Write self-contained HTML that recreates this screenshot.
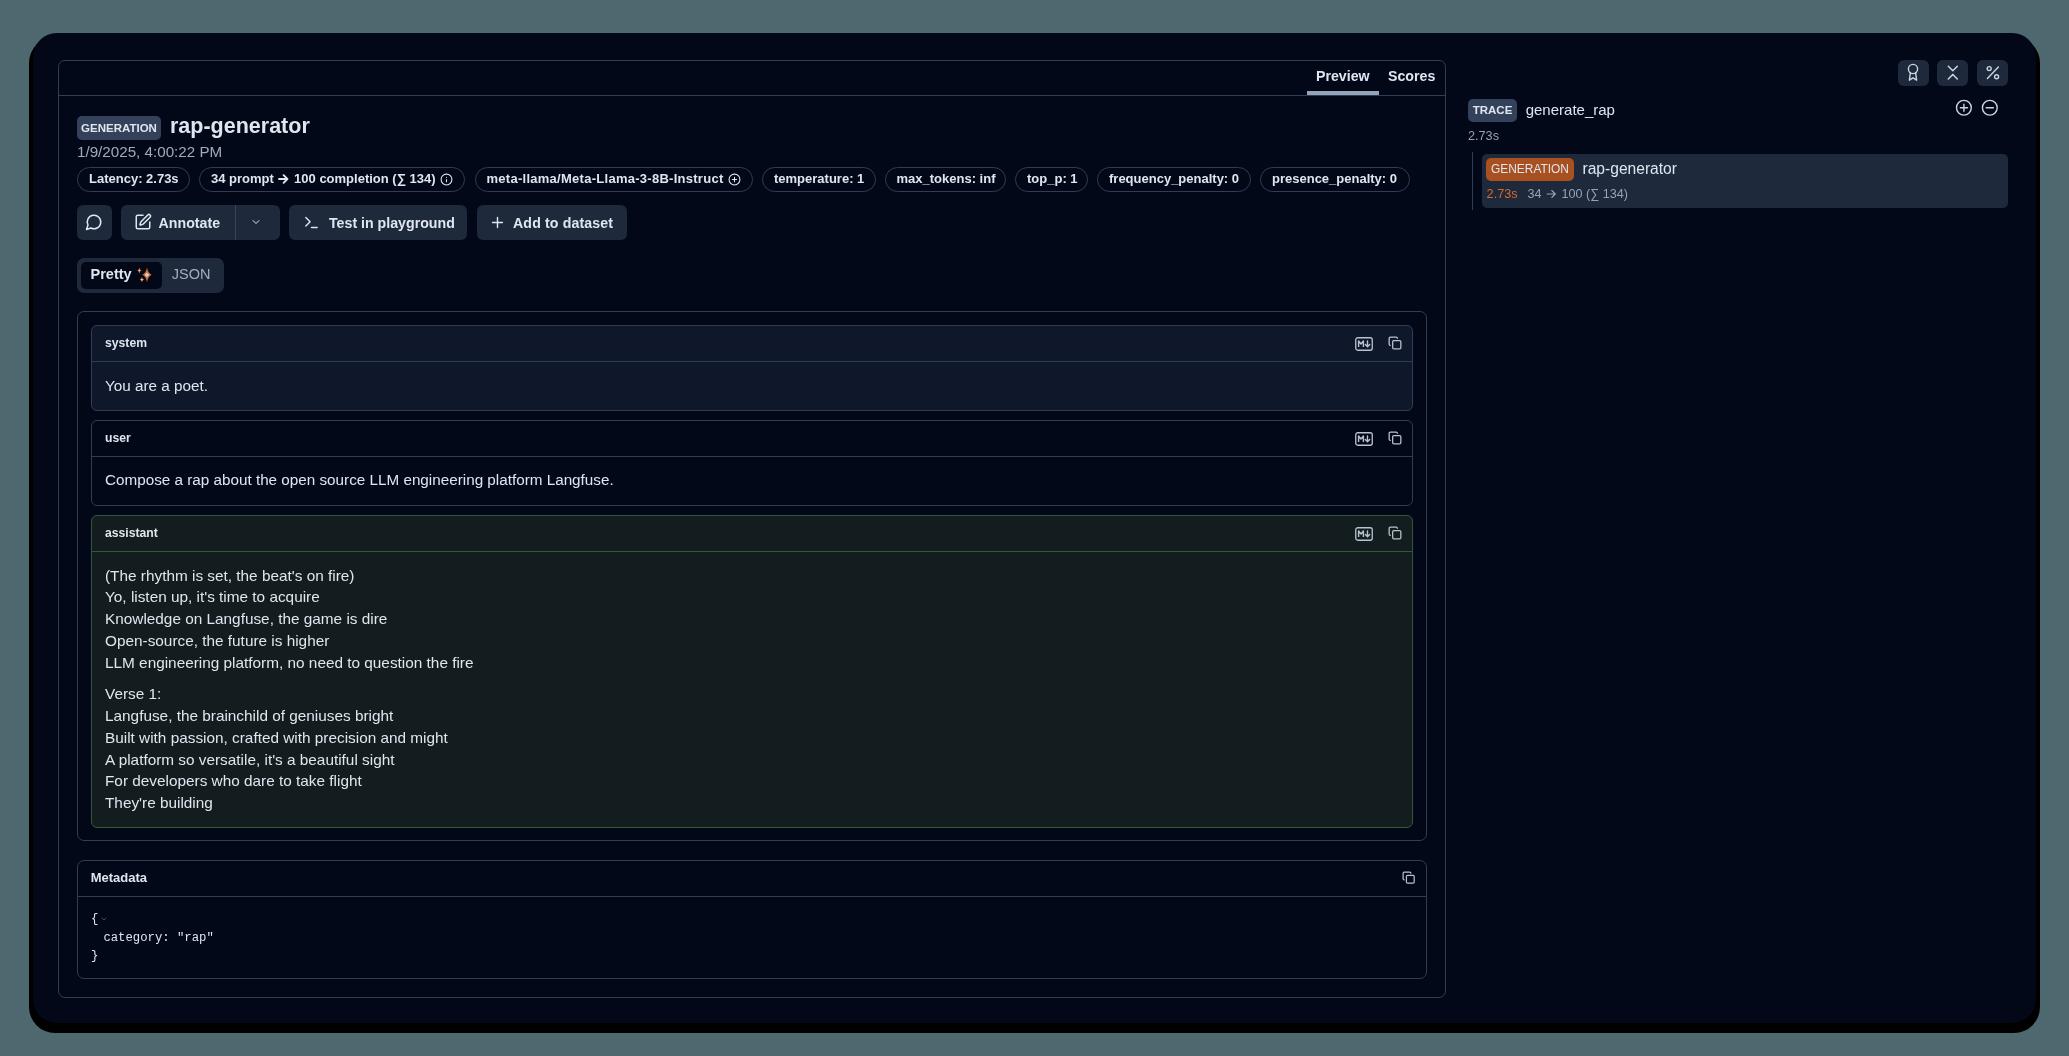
<!DOCTYPE html>
<html><head><meta charset="utf-8">
<style>
*{box-sizing:border-box;margin:0;padding:0}
html,body{width:2069px;height:1056px;overflow:hidden;background:#4e6870;font-family:"Liberation Sans",sans-serif;color:#dfe6f0}
body{position:relative}
.a{position:absolute;white-space:nowrap}
#shadow{position:absolute;left:29px;top:37px;width:2011px;height:996px;background:#000;border-radius:26px}
#win{position:absolute;left:33px;top:33px;width:2003px;height:990px;background:#020817;border-radius:24px}
.bd{border:1px solid #2f3d55}
#panel{left:58px;top:60px;width:1388px;height:938px;border-radius:7px}
.hl{position:absolute;height:1px;background:#2f3d55}
.tab{font-weight:700;font-size:14.2px;line-height:17px;color:#dfe6f0}
svg.i{position:absolute;fill:none;stroke:currentColor;stroke-linecap:round;stroke-linejoin:round}
.badge{background:#33425a;color:#dfe6f0;border-radius:5px;font-weight:700;text-align:center}
.chip{top:167px;height:25px;border-radius:13px;font-weight:700;font-size:13px;line-height:22px;padding-left:11px;color:#dfe6f0}
.btn{top:205px;height:35px;background:#1e293b;border-radius:6px}
.btxt{font-weight:700;font-size:14.2px;line-height:17px;color:#dfe6f0}
.box{border-radius:6px}
.role{font-weight:700;font-size:12.2px;line-height:15px;color:#dfe6f0}
.msg{font-size:15.35px;line-height:18px;color:#dfe6f0}
.mono{font-family:"Liberation Mono",monospace;font-size:12.27px;line-height:18.4px;color:#dfe6f0}
</style></head>
<body>
<div id="root" style="position:absolute;left:0;top:0;width:2069px;height:1056px;will-change:transform">
<div id="shadow"></div>
<div id="win"></div>

<!-- LEFT PANEL -->
<div id="panel" class="a bd"></div>
<div class="hl" style="left:59px;top:95px;width:1386px"></div>
<div class="a tab" style="left:1316px;top:67.6px">Preview</div>
<div class="a tab" style="left:1388px;top:67.6px">Scores</div>
<div class="a" style="left:1307px;top:91px;width:72px;height:4px;background:#94a3b8"></div>

<!-- title -->
<div class="a badge" style="left:77px;top:116px;width:84px;height:24px;font-size:11.5px;line-height:24px">GENERATION</div>
<div class="a" style="left:170px;top:113.5px;font-weight:700;font-size:21.5px;line-height:24px;color:#dfe6f0">rap-generator</div>
<div class="a" style="left:77px;top:142.7px;font-size:15.2px;line-height:18px;color:#9eabbd">1/9/2025, 4:00:22 PM</div>

<!-- chips -->
<div class="a chip bd" style="left:77px;width:113px">Latency: 2.73s</div>
<div class="a chip bd" style="left:199px;width:266px">34 prompt <svg style="display:inline-block;vertical-align:-1px;margin:0 1px" width="11" height="10" viewBox="0 0 11 10"><path d="M1 5h8.3M5.6 1.2 9.4 5 5.6 8.8" fill="none" stroke="currentColor" stroke-width="1.9" stroke-linecap="round" stroke-linejoin="round"/></svg> 100 completion (∑ 134)</div>
<svg class="i" style="left:440px;top:173px;color:#dfe6f0" width="13" height="13" viewBox="0 0 24 24" stroke-width="2"><circle cx="12" cy="12" r="10"/><path d="M12 16v-4M12 8h.01"/></svg>
<div class="a chip bd" style="left:474.5px;width:278.5px;letter-spacing:0.27px">meta-llama/Meta-Llama-3-8B-Instruct</div>
<svg class="i" style="left:728px;top:173px;color:#dfe6f0" width="13" height="13" viewBox="0 0 24 24" stroke-width="2"><circle cx="12" cy="12" r="10"/><path d="M8 12h8M12 8v8"/></svg>
<div class="a chip bd" style="left:762px;width:114px">temperature: 1</div>
<div class="a chip bd" style="left:884.5px;width:121px">max_tokens: inf</div>
<div class="a chip bd" style="left:1015px;width:73px">top_p: 1</div>
<div class="a chip bd" style="left:1097px;width:154px">frequency_penalty: 0</div>
<div class="a chip bd" style="left:1260px;width:150px">presence_penalty: 0</div>

<!-- buttons -->
<div class="a btn" style="left:77px;width:35px"></div>
<svg class="i" style="left:85px;top:213px;color:#dfe6f0" width="18" height="18" viewBox="0 0 24 24" stroke-width="2"><path d="M7.9 20A9 9 0 1 0 4 16.1L2 22Z"/></svg>
<div class="a btn" style="left:121px;width:159px"></div>
<div class="a" style="left:235px;top:205px;width:1px;height:35px;background:#34445e"></div>
<svg class="i" style="left:134px;top:213px;color:#dfe6f0" width="18" height="18" viewBox="0 0 24 24" stroke-width="2"><path d="M12 3H5a2 2 0 0 0-2 2v14a2 2 0 0 0 2 2h14a2 2 0 0 0 2-2v-7"/><path d="M18.375 2.625a1 1 0 0 1 3 3l-9.013 9.014a2 2 0 0 1-.853.505l-2.873.84a.5.5 0 0 1-.62-.62l.84-2.873a2 2 0 0 1 .506-.852z"/></svg>
<div class="a btxt" style="left:158.6px;top:214.6px">Annotate</div>
<svg class="i" style="left:250px;top:216px;color:#dfe6f0" width="12" height="12" viewBox="0 0 24 24" stroke-width="2"><path d="m6 9 6 6 6-6"/></svg>
<div class="a btn" style="left:289px;width:178px"></div>
<svg class="i" style="left:302.5px;top:214px;color:#dfe6f0" width="17" height="17" viewBox="0 0 24 24" stroke-width="2"><polyline points="4 17 10 11 4 5"/><line x1="12" x2="20" y1="19" y2="19"/></svg>
<div class="a btxt" style="left:329px;top:214.6px">Test in playground</div>
<div class="a btn" style="left:477px;width:150px"></div>
<svg class="i" style="left:489px;top:214px;color:#dfe6f0" width="17" height="17" viewBox="0 0 24 24" stroke-width="2"><path d="M5 12h14M12 5v14"/></svg>
<div class="a btxt" style="left:513px;top:214.6px;letter-spacing:0.12px">Add to dataset</div>

<!-- pretty/json -->
<div class="a" style="left:77px;top:258px;width:147px;height:35px;background:#1e293b;border-radius:7px"></div>
<div class="a" style="left:81px;top:262px;width:81px;height:27px;background:#020817;border-radius:5px"></div>
<div class="a" style="left:90.5px;top:265.9px;font-weight:700;font-size:14.5px;line-height:17px;color:#dfe6f0">Pretty</div>
<svg class="a" style="left:136px;top:264px" width="20" height="20" viewBox="0 0 20 20"><path d="M11 3.500000000000001 Q12.056000000000001 9.194 15.8 10.8 Q12.056000000000001 12.406 11 18.1 Q9.943999999999999 12.406 6.2 10.8 Q9.943999999999999 9.194 11 3.500000000000001Z" fill="#d2672a"/><path d="M11 8.4 Q12.08 9.72 13.4 10.8 Q12.08 11.88 11 13.200000000000001 Q9.92 11.88 8.6 10.8 Q9.92 9.72 11 8.4Z" fill="#c9d3e0"/><path d="M3.4 3.4 Q3.862 5.818 5.5 6.5 Q3.862 7.182 3.4 9.6 Q2.9379999999999997 7.182 1.2999999999999998 6.5 Q2.9379999999999997 5.818 3.4 3.4Z" fill="#d2672a"/><circle cx="3.4" cy="6.5" r="0.8" fill="#c9d3e0"/><path d="M5.9 13.0 Q6.406000000000001 15.027999999999999 8.2 15.6 Q6.406000000000001 16.172 5.9 18.2 Q5.394 16.172 3.6000000000000005 15.6 Q5.394 15.027999999999999 5.9 13.0Z" fill="#d2672a"/><circle cx="5.9" cy="15.6" r="0.9" fill="#c9d3e0"/></svg>
<div class="a" style="left:171.8px;top:265.9px;font-size:14.5px;line-height:17px;color:#a3afc0">JSON</div>

<!-- messages container -->
<div class="a bd" style="left:77px;top:311px;width:1350px;height:530px;border-radius:7px"></div>

<!-- system -->
<div class="a bd box" style="left:91px;top:325px;width:1322px;height:86px;background:#0f172a"></div>
<div class="hl" style="left:92px;top:361px;width:1320px"></div>
<div class="a role" style="left:105px;top:335.8px">system</div>
<div class="a msg" style="left:105px;top:377px;font-size:15.25px">You are a poet.</div>

<!-- user -->
<div class="a bd box" style="left:91px;top:420px;width:1322px;height:86px;background:#020817"></div>
<div class="hl" style="left:92px;top:456px;width:1320px"></div>
<div class="a role" style="left:105px;top:430.6px">user</div>
<div class="a msg" style="left:105px;top:471.2px;font-size:15.25px">Compose a rap about the open source LLM engineering platform Langfuse.</div>

<!-- assistant -->
<div class="a box" style="left:91px;top:515px;width:1322px;height:313px;background:#131c1f;border:1px solid #33573a"></div>
<div class="hl" style="left:92px;top:551px;width:1320px;background:#33573a"></div>
<div class="a role" style="left:105px;top:525.8px">assistant</div>
<div class="a msg" style="left:105px;top:564.7px;line-height:21.7px">(The rhythm is set, the beat's on fire)<br>Yo, listen up, it's time to acquire<br>Knowledge on Langfuse, the game is dire<br>Open-source, the future is higher<br>LLM engineering platform, no need to question the fire</div>
<div class="a msg" style="left:105px;top:683.4px;line-height:21.7px">Verse 1:<br>Langfuse, the brainchild of geniuses bright<br>Built with passion, crafted with precision and might<br>A platform so versatile, it's a beautiful sight<br>For developers who dare to take flight<br>They're building</div>

<!-- metadata -->
<div class="a bd" style="left:77px;top:860px;width:1350px;height:119px;border-radius:7px"></div>
<div class="hl" style="left:78px;top:896px;width:1348px"></div>
<div class="a" style="left:90.7px;top:870.4px;font-weight:700;font-size:13px;line-height:16px;color:#dfe6f0">Metadata</div>
<div class="a mono" style="left:91px;top:910.3px">{</div><div class="a mono" style="left:103.4px;top:928.7px">category: "rap"</div><div class="a mono" style="left:91px;top:947.1px">}</div>
<svg class="i" style="left:100px;top:915px;color:#64748b" width="8" height="8" viewBox="0 0 24 24" stroke-width="2"><path d="m6 9 6 6 6-6"/></svg>

<!-- RIGHT SIDE -->
<div class="a btn" style="left:1898px;top:60px;width:31px;height:26px"></div>
<div class="a btn" style="left:1937px;top:60px;width:31px;height:26px"></div>
<div class="a btn" style="left:1977px;top:60px;width:31px;height:26px"></div>

<svg class="a" style="left:1900px;top:58px" width="110" height="62" viewBox="1900 58 110 62" fill="none" stroke="#cbd5e1" stroke-linecap="round" stroke-linejoin="round">
<circle cx="1913" cy="69" r="4.6" stroke-width="1.4"/>
<path d="M10.4 14.4 9.4 22.2 13 19.8 16.6 22.2 15.6 14.4" transform="translate(1900 58)" stroke-width="1.4"/>
<path d="M1948.3 66.2 1952.8 70.8 1957.3 66.2M1948.3 79 1952.8 74.4 1957.3 79" stroke-width="1.5"/>
<circle cx="1989.2" cy="68.6" r="2" stroke-width="1.4"/><circle cx="1996.6" cy="76.7" r="2" stroke-width="1.4"/><path d="M1998.4 67 1987.4 78.6" stroke-width="1.4"/>
<circle cx="1963.9" cy="107.75" r="7.4" stroke-width="1.4"/><path d="M1960.3 107.75h7.2M1963.9 104.15v7.2" stroke-width="1.4"/>
<circle cx="1989.8" cy="107.75" r="7.4" stroke-width="1.4"/><path d="M1986.2 107.75h7.2" stroke-width="1.4"/>
</svg>
<div class="a badge" style="left:1468px;top:99px;width:49px;height:23px;font-size:11.5px;line-height:23px;font-weight:700">TRACE</div>
<div class="a" style="left:1525.7px;top:101px;font-size:15px;line-height:18px;color:#dfe6f0">generate_rap</div>
<div class="a" style="left:1468px;top:129px;font-size:12.67px;line-height:15px;color:#94a3b8">2.73s</div>
<div class="a" style="left:1472px;top:152px;width:1px;height:58px;background:#2f3d55"></div>
<div class="a" style="left:1482px;top:154px;width:526px;height:54px;background:#1e293b;border-radius:5px"></div>
<div class="a" style="left:1486px;top:158px;width:88px;height:23px;background:#a8501f;border-radius:5px;color:#dfe6f0;font-size:11.93px;line-height:23px;text-align:center">GENERATION</div>
<div class="a" style="left:1582.5px;top:159.5px;font-size:15.6px;line-height:18px;color:#dfe6f0">rap-generator</div>
<div class="a" style="left:1486.6px;top:187px;font-size:12.67px;line-height:15px;color:#d9692b">2.73s</div>
<div class="a" style="left:1527.5px;top:187px;font-size:12.6px;line-height:15px;color:#94a3b8">34 <svg style="display:inline-block;vertical-align:-1px;margin:0 1px" width="11" height="10" viewBox="0 0 11 10"><path d="M1.2 5h8M5.8 1.5 9.3 5 5.8 8.5" fill="none" stroke="currentColor" stroke-width="1.15" stroke-linecap="round" stroke-linejoin="round"/></svg> 100 (∑ 134)</div>

<!-- copy / md icons -->
<svg class="a" style="left:1354.5px;top:337px" width="18" height="14" viewBox="0 0 18 14"><rect x="0.75" y="0.75" width="16.5" height="12.5" rx="2" fill="none" stroke="#b8c2d0" stroke-width="1.3"/><path d="M3.6 10V4l2.4 3 2.4-3v6" fill="none" stroke="#b8c2d0" stroke-width="1.4" stroke-linejoin="round"/><path d="M12.5 4v5.5M10.3 7.5l2.2 2.3 2.2-2.3" fill="none" stroke="#b8c2d0" stroke-width="1.4" stroke-linejoin="round" stroke-linecap="round"/></svg><svg class="i" style="left:1387.5px;top:336px;color:#b8c2d0" width="14" height="14" viewBox="0 0 24 24" stroke-width="2.2"><rect width="14" height="14" x="8" y="8" rx="2" ry="2"/><path d="M4 16c-1.1 0-2-.9-2-2V4c0-1.1.9-2 2-2h10c1.1 0 2 .9 2 2"/></svg>
<svg class="a" style="left:1354.5px;top:432px" width="18" height="14" viewBox="0 0 18 14"><rect x="0.75" y="0.75" width="16.5" height="12.5" rx="2" fill="none" stroke="#b8c2d0" stroke-width="1.3"/><path d="M3.6 10V4l2.4 3 2.4-3v6" fill="none" stroke="#b8c2d0" stroke-width="1.4" stroke-linejoin="round"/><path d="M12.5 4v5.5M10.3 7.5l2.2 2.3 2.2-2.3" fill="none" stroke="#b8c2d0" stroke-width="1.4" stroke-linejoin="round" stroke-linecap="round"/></svg><svg class="i" style="left:1387.5px;top:431px;color:#b8c2d0" width="14" height="14" viewBox="0 0 24 24" stroke-width="2.2"><rect width="14" height="14" x="8" y="8" rx="2" ry="2"/><path d="M4 16c-1.1 0-2-.9-2-2V4c0-1.1.9-2 2-2h10c1.1 0 2 .9 2 2"/></svg>
<svg class="a" style="left:1354.5px;top:527px" width="18" height="14" viewBox="0 0 18 14"><rect x="0.75" y="0.75" width="16.5" height="12.5" rx="2" fill="none" stroke="#b8c2d0" stroke-width="1.3"/><path d="M3.6 10V4l2.4 3 2.4-3v6" fill="none" stroke="#b8c2d0" stroke-width="1.4" stroke-linejoin="round"/><path d="M12.5 4v5.5M10.3 7.5l2.2 2.3 2.2-2.3" fill="none" stroke="#b8c2d0" stroke-width="1.4" stroke-linejoin="round" stroke-linecap="round"/></svg><svg class="i" style="left:1387.5px;top:526px;color:#b8c2d0" width="14" height="14" viewBox="0 0 24 24" stroke-width="2.2"><rect width="14" height="14" x="8" y="8" rx="2" ry="2"/><path d="M4 16c-1.1 0-2-.9-2-2V4c0-1.1.9-2 2-2h10c1.1 0 2 .9 2 2"/></svg>
<svg class="i" style="left:1402px;top:870.8px;color:#b8c2d0" width="13.3" height="13.3" viewBox="0 0 24 24" stroke-width="2.2"><rect width="14" height="14" x="8" y="8" rx="2" ry="2"/><path d="M4 16c-1.1 0-2-.9-2-2V4c0-1.1.9-2 2-2h10c1.1 0 2 .9 2 2"/></svg>

</div>
</body></html>
